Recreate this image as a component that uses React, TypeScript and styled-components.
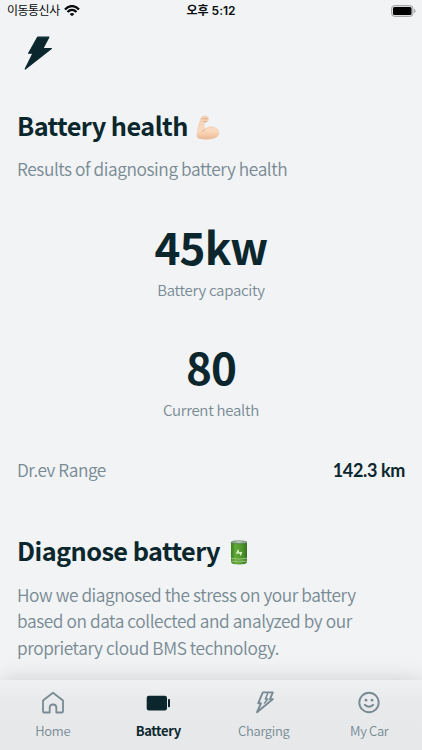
import React from "react";
import styled, { createGlobalStyle } from "styled-components";

const ink = "#0b272d";
const muted = "#788a93";

const GlobalStyle = createGlobalStyle`
  * { box-sizing: border-box; }
  body { margin: 0; background: #f1f3f5; overflow: hidden; }
  h1, h2, p { margin: 0; }
  svg { display: block; flex: none; }
`;

const Screen = styled.div`
  width: 422px;
  height: 750px;
  display: flex;
  flex-direction: column;
  overflow: hidden;
  background: #f1f3f5;
  color: ${ink};
  font-family: "Noto Sans CJK KR", sans-serif;
`;

const StatusBar = styled.header`
  height: 22px;
  flex: none;
  display: grid;
  grid-template-columns: 1fr auto 1fr;
  align-items: center;
  padding: 0 6px 0 7px;
  color: #080b0d;
  font-family: "Inter", "Noto Sans CJK KR", sans-serif;
  font-size: 12px;
  line-height: 20px;
`;

const Carrier = styled.div`
  display: flex;
  align-items: center;
  gap: 4px;
  letter-spacing: -0.5px;
`;

const Clock = styled.div`
  padding-right: 1px;
  font-weight: 600;
`;

const BatteryLevel = styled.div`
  justify-self: end;
`;

const LogoBar = styled.div`
  height: 84px;
  flex: none;
  padding: 14px 0 0 24px;
`;

const Content = styled.main`
  flex: none;
  height: 574px;
  padding: 0 17px;
`;

const Heading = styled.h1<{ $gap: number }>`
  display: flex;
  align-items: center;
  gap: ${(p) => p.$gap}px;
  height: 38px;
  font-size: 25.3px;
  line-height: 38px;
  font-weight: 700;
  letter-spacing: -0.022em;
  white-space: nowrap;

  svg {
    margin-top: 5px;
  }
`;

const Description = styled.p<{ $top: number }>`
  margin-top: ${(p) => p.$top}px;
  color: ${muted};
  font-size: 17.3px;
  line-height: 26.6px;
  font-weight: 350;
  letter-spacing: -0.024em;
  white-space: nowrap;
`;

const Metric = styled.section<{ $top: number }>`
  margin-top: ${(p) => p.$top}px;
  height: 90px;
  text-align: center;
`;

const MetricValue = styled.div`
  height: 65px;
  font-size: 44px;
  line-height: 65px;
  font-weight: 700;
  letter-spacing: -0.02em;
`;

const MetricLabel = styled.div`
  color: ${muted};
  font-size: 15px;
  line-height: 22px;
  font-weight: 350;
  letter-spacing: -0.018em;
`;

const RangeRow = styled.div`
  margin-top: 32px;
  display: flex;
  justify-content: space-between;
  align-items: baseline;
  height: 27px;
  font-size: 17.3px;
  line-height: 27px;
  color: ${muted};
  font-weight: 350;
  letter-spacing: -0.026em;
`;

const RangeValue = styled.strong`
  color: ${ink};
  font-family: "Lato", sans-serif;
  font-size: 18px;
  font-weight: 700;
  letter-spacing: -0.02em;
`;

const DiagnoseSection = styled.section`
  margin-top: 48px;
`;

const TabBar = styled.nav`
  position: relative;
  flex: none;
  height: 70px;
  display: grid;
  grid-template-columns: repeat(4, 1fr);
  background: linear-gradient(#eff0f2, #e7e9eb 24px, #e6e8ea);
  box-shadow: 0 0 22px rgba(0, 0, 0, 0.15);
`;

const Tab = styled.div<{ $active?: boolean }>`
  display: flex;
  flex-direction: column;
  align-items: center;
  padding-top: 11px;
  gap: 6px;
  color: ${(p) => (p.$active ? ink : muted)};
  font-size: 13px;
  line-height: 19px;
  font-weight: ${(p) => (p.$active ? 700 : 350)};
  letter-spacing: -0.026em;
`;

const boltPath = "M13.6 1.2H24.8L18.8 12.6H27.4L1.2 33L9 17.2H4.6Z";

const WifiIcon = () => (
  <svg width="16" height="12" viewBox="0 0 16 12" fill="none" stroke="currentColor" strokeWidth="2.3">
    <path d="M1 4.5C5-.1 11-.1 15 4.5M3.5 7C6.2 4.3 9.8 4.3 12.5 7" />
    <path d="M8 11.3 5.6 8.9Q8 7.1 10.4 8.9Z" fill="currentColor" stroke="none" />
  </svg>
);

const PhoneBatteryIcon = () => (
  <svg width="25" height="12" viewBox="0 0 25 12">
    <rect x=".5" y=".5" width="21.5" height="11" rx="3.2" fill="#d9dadb" stroke="#a6a7a9" />
    <rect x="2" y="2" width="18.5" height="8" rx="1.5" fill="#000" />
    <path d="M23.3 4v4q1.2-.7 1.2-2t-1.2-2" fill="#8c8e90" />
  </svg>
);

const LogoIcon = () => (
  <svg width="29" height="35" viewBox="0 0 29 35">
    <path d={boltPath} fill={ink} stroke={ink} strokeWidth="1.2" strokeLinejoin="round" />
  </svg>
);

const ArmIcon = () => (
  <svg width="24" height="26" viewBox="0 0 24 26">
    <defs>
      <linearGradient id="skin" x1="0" y1="0" x2="0" y2="1">
        <stop offset="0" stopColor="#f5d3b8" />
        <stop offset=".65" stopColor="#fbdabf" />
        <stop offset="1" stopColor="#eab891" />
      </linearGradient>
    </defs>
    <path
      d="M5 3.2Q5.8.9 8.4 1Q11.5.7 12.2 3Q12.9 5.3 11.3 6.5L8.2 7.2Q7.2 10.6 8.9 14.3Q12.5 10.8 17 12Q22.7 13.6 23 18.2Q22.4 22.4 16 23.7Q8 25 2.3 23.3Q.9 22.5 1.1 19.5Q2 10.8 5 3.2Z"
      fill="url(#skin)"
      stroke="#ebbf9e"
      strokeWidth=".5"
    />
    <path d="M5.8 4.2Q7.5 2.7 8.7 4.1Q10 2.8 11.8 4M7.2 6.3Q8.8 7.6 11.1 6.3M8.9 14.3Q8 16 6 16.6" fill="none" stroke="#d39b74" strokeWidth=".8" />
  </svg>
);

const CellIcon = () => (
  <svg width="18" height="25" viewBox="0 0 18 25">
    <defs>
      <linearGradient id="cell">
        <stop offset="0" stopColor="#397d20" />
        <stop offset=".28" stopColor="#63aa37" />
        <stop offset=".7" stopColor="#4d942b" />
        <stop offset="1" stopColor="#34721f" />
      </linearGradient>
    </defs>
    <path d="M1 2.5V22Q1.3 24.5 9 24.5T17 22V2.5Z" fill="url(#cell)" />
    <ellipse cx="9" cy="2.3" rx="8" ry="1.5" fill="#9caf9a" stroke="#467348" strokeWidth=".6" />
    <ellipse cx="9" cy="1.8" rx="3" ry=".8" fill="#c1cec0" />
    <path d="M8.2 8.8 9.2 12.2 12.5 11.8 10.7 16 9.4 13.4 5.9 13.7Z" fill="#d7efc6" />
    <path d="M1 18.2Q9 20 17 18.2M1 21.2Q9 22.8 17 21.2" fill="none" stroke="#a9cd8f" strokeWidth=".8" />
    <path d="M2 19.8Q9 21.4 16 19.8" fill="none" stroke="#87b96a" strokeWidth=".9" strokeDasharray="1 .7" />
  </svg>
);

const HomeIcon = () => (
  <svg width="24" height="24" viewBox="0 0 24 24" fill="none" stroke="currentColor" strokeWidth="1.8" strokeLinejoin="round">
    <path d="M2 9.5 12 1.7 22 9.5V20.2Q22 21.5 20.7 21.5H15.3V16.5Q15.3 13.5 12 13.5T8.7 16.5V21.5H3.3Q2 21.5 2 20.2Z" />
  </svg>
);

const BatteryIcon = () => (
  <svg width="24" height="24" viewBox="0 0 24 24" fill="currentColor">
    <rect x=".7" y="4.8" width="20.3" height="14.6" rx="2.2" />
    <rect x="22" y="8" width="2" height="8.3" rx=".7" />
  </svg>
);

const ChargingIcon = () => (
  <svg width="24" height="24" viewBox="0 0 24 24" fill="none" stroke="currentColor" strokeWidth="1.9" strokeLinejoin="round">
    <path d="M10.8 1.4H20.8L18 8.1H20.9L5 21.2 9 12.3H6.2Z" />
    <path d="M15.9 2 13.3 8.1H15.8L12.2 12.4" strokeWidth="1.5" />
  </svg>
);

const SmileIcon = () => (
  <svg width="24" height="24" viewBox="0 0 24 24" fill="none" stroke="currentColor" strokeWidth="1.9" strokeLinecap="round">
    <circle cx="12" cy="11.5" r="9.7" />
    <path d="M7.8 13.8Q12 17.8 16.2 13.8" />
    <g fill="currentColor" stroke="none">
      <circle cx="9" cy="9.2" r="1.35" />
      <circle cx="15" cy="9.2" r="1.35" />
    </g>
  </svg>
);

const tabs = [
  { label: "Home", Icon: HomeIcon },
  { label: "Battery", Icon: BatteryIcon, active: true },
  { label: "Charging", Icon: ChargingIcon },
  { label: "My Car", Icon: SmileIcon },
];

export default function App() {
  return (
    <>
      <GlobalStyle />
      <Screen>
        <StatusBar>
          <Carrier>
            <span>이동통신사</span>
            <WifiIcon />
          </Carrier>
          <Clock>오후 5:12</Clock>
          <BatteryLevel>
            <PhoneBatteryIcon />
          </BatteryLevel>
        </StatusBar>
        <LogoBar>
          <LogoIcon />
        </LogoBar>
        <Content>
          <Heading $gap={8}>
            <span>Battery health</span>
            <ArmIcon />
          </Heading>
          <Description $top={12}>Results of diagnosing battery health</Description>
          <Metric $top={31}>
            <MetricValue>45kw</MetricValue>
            <MetricLabel>Battery capacity</MetricLabel>
          </Metric>
          <Metric $top={30}>
            <MetricValue>80</MetricValue>
            <MetricLabel>Current health</MetricLabel>
          </Metric>
          <RangeRow>
            <span>Dr.ev Range</span>
            <RangeValue>142.3 km</RangeValue>
          </RangeRow>
          <DiagnoseSection>
            <Heading as="h2" $gap={10}>
              <span>Diagnose battery</span>
              <CellIcon />
            </Heading>
            <Description $top={13}>
              How we diagnosed the stress on your battery
              <br />
              based on data collected and analyzed by our
              <br />
              proprietary cloud BMS technology.
            </Description>
          </DiagnoseSection>
        </Content>
        <TabBar>
          {tabs.map(({ label, Icon, active }) => (
            <Tab key={label} $active={active}>
              <Icon />
              <span>{label}</span>
            </Tab>
          ))}
        </TabBar>
      </Screen>
    </>
  );
}
